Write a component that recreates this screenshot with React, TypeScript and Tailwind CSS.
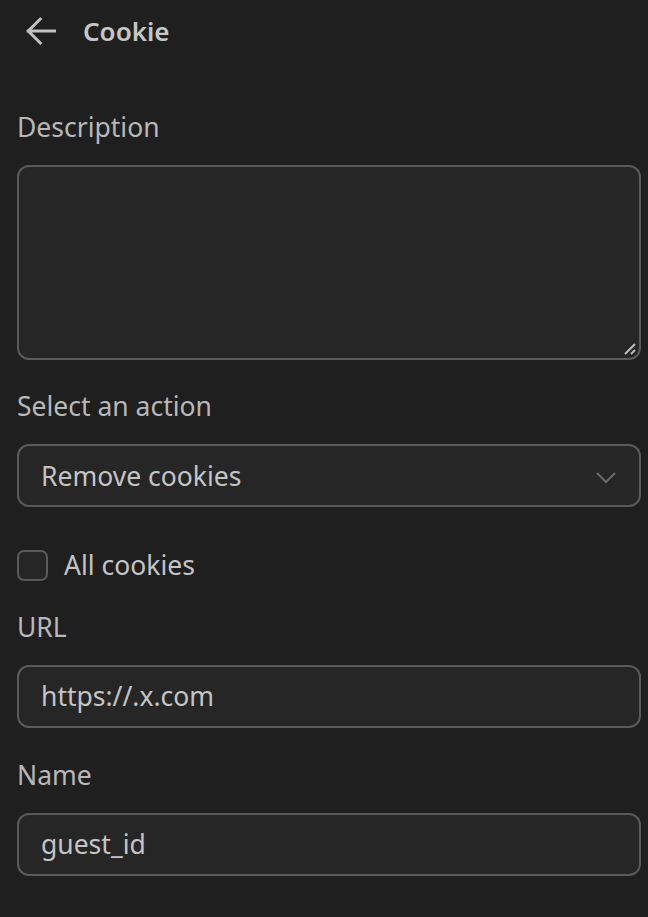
import React from 'react';

const font = { fontFamily: '"Noto Sans", "Open Sans", sans-serif' };

function Label({ children }: { children: React.ReactNode }) {
  return <div className="text-[26.5px] leading-[34px] text-[#b8b8b8]">{children}</div>;
}

function TextInput({ value }: { value: string }) {
  return (
    <div className="h-[63px] w-full rounded-[12px] border-2 border-[#5a5a5a] bg-[#262626] px-[22px] pt-[2px] flex items-center text-[26.5px] text-[#c4c4c4]">
      {value}
    </div>
  );
}

export default function App() {
  return (
    <div className="min-h-[917px] w-[648px] bg-[#1f1f1f] pl-[17px] pr-[7px]" style={font}>
      <div className="flex h-[62px] items-center gap-[24px] pl-[6px]">
        <svg width="36" height="36" viewBox="0 0 24 24" fill="none" stroke="#c2c2c2" strokeWidth="2" strokeLinecap="square">
          <path d="M21 12H3.5M11.5 4l-8 8 8 8" />
        </svg>
        <div className="text-[26px] font-semibold text-[#c6c6c6]">Cookie</div>
      </div>

      <div className="mt-[48px]">
        <Label>Description</Label>
        <div className="relative mt-[21px] h-[195px] w-full rounded-[12px] border-2 border-[#5a5a5a] bg-[#262626]">
          <svg className="absolute bottom-[2px] right-[2px]" width="14" height="14" viewBox="0 0 14 14" stroke="#bdbdbd" strokeWidth="2">
            <path d="M2 12L12 2M8 12l4-4" />
          </svg>
        </div>
      </div>

      <div className="mt-[29px]">
        <Label>Select an action</Label>
        <div className="mt-[21px] flex h-[63px] w-full items-center justify-between rounded-[12px] border-2 border-[#5a5a5a] bg-[#262626] pl-[22px] pr-[22px] pt-[2px] text-[26.5px] text-[#c4c4c4]">
          <span>Remove cookies</span>
          <svg width="22" height="14" viewBox="0 0 22 14" fill="none" stroke="#6a6a6a" strokeWidth="2">
            <path d="M2 3l9 9 9-9" />
          </svg>
        </div>
      </div>

      <div className="mt-[39px] flex items-center gap-[16px]">
        <div className="h-[31px] w-[31px] rounded-[7px] border-2 border-[#5a5a5a] bg-[#262626]" />
        <span className="text-[26.5px] text-[#c4c4c4]">All cookies</span>
      </div>

      <div className="mt-[24px]">
        <Label>URL</Label>
        <div className="mt-[21px]">
          <TextInput value="https://.x.com" />
        </div>
      </div>

      <div className="mt-[30px]">
        <Label>Name</Label>
        <div className="mt-[21px]">
          <TextInput value="guest_id" />
        </div>
      </div>
    </div>
  );
}
